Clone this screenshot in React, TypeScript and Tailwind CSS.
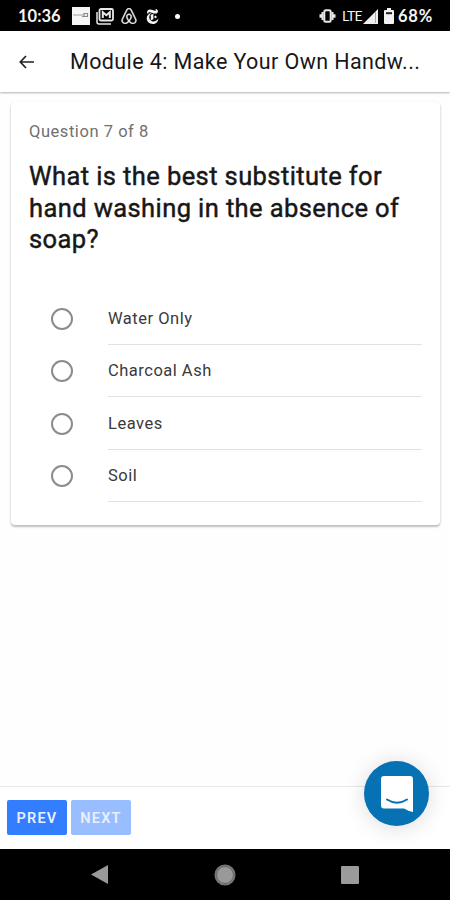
import React, { useState } from 'react';
import { SiAirbnb, SiNewyorktimes } from 'react-icons/si';

const options = ['Water Only', 'Charcoal Ash', 'Leaves', 'Soil'];

const StatusBar: React.FC = () => (
  <div className="flex h-[31px] shrink-0 items-center justify-between bg-black pt-px pl-[18px] pr-[17px] text-[#f4f4f4]">
    <div className="flex items-center">
      <span className="w-[54px] whitespace-nowrap font-[Lato] text-[16.5px] font-bold leading-none">10:36</span>
      <svg width="18" height="18" viewBox="0 0 18 18">
        <path d="M0 0h18v18H0z" fill="#f5f5f5" />
        <path d="M1 8h10" stroke="#bbb" strokeWidth="1.5" />
        <path d="M10 9.5h6M12 9V6.5h3.5V10" fill="none" stroke="#888" strokeWidth="1.2" />
      </svg>
      <svg className="ml-[6px]" width="18" height="17" viewBox="0 0 18 17" fill="none" stroke="#e8e8e8">
        <path d="M1 4v10q0 2 2 2h12" strokeWidth="1.5" />
        <rect x="3.5" y="1" width="13.5" height="11.5" rx="1.5" strokeWidth="1.8" />
        <path d="M6.8 10V4.2l3.5 3 3.5-3V10" strokeWidth="2" />
      </svg>
      <SiAirbnb className="ml-[7px]" size={16} stroke="#e8e8e8" strokeWidth={0.8} />
      <SiNewyorktimes className="ml-[8px]" size={15} />
      <span className="ml-[15px] size-[5px] rounded-full bg-white" />
    </div>
    <div className="flex items-center">
      <svg width="17" height="14" viewBox="0 0 17 14" fill="none" stroke="#e8e8e8">
        <rect x="5.3" y="1.2" width="6.4" height="11.6" rx="1.5" strokeWidth="2" />
        <path d="M3.5 3v8M13.5 3v8M1.5 5.2v3.6M15.5 5.2v3.6" strokeWidth="2" />
      </svg>
      <span className="ml-[6px] w-[21px] whitespace-nowrap font-[Lato] text-[14px] leading-none tracking-[-0.8px]">LTE</span>
      <svg width="15" height="15" viewBox="0 0 15 15">
        <path d="M15 0v15H0z" fill="#eee" />
        <path d="M12.5 3v11" stroke="#aaa" />
      </svg>
      <svg className="ml-[6px]" width="10" height="16" viewBox="0 0 10 16">
        <path d="M3 0h4v2h2q1 0 1 1v12q0 1-1 1H1q-1 0-1-1V3q0-1 1-1h2z" fill="#f2f2f2" />
        <path d="M2 4.2h6v2H2z" fill="#222" />
      </svg>
      <span className="ml-[4px] w-[35px] whitespace-nowrap font-[Lato] text-[16.5px] font-bold leading-none tracking-[0.8px]">68%</span>
    </div>
  </div>
);

const Header: React.FC = () => (
  <header className="flex h-[61px] shrink-0 items-center bg-white pl-[19px] shadow-[0_1px_2px_rgba(0,0,0,0.3)]">
    <svg width="16" height="14" viewBox="0 0 16 14" fill="none" stroke="#222" strokeWidth="1.7">
      <path d="M15 7H1.5M7 1 1.3 7 7 13" />
    </svg>
    <h1 className="ml-[35px] whitespace-nowrap pt-px text-[21.5px] leading-none tracking-[0.4px] text-[#171717]">
      Module 4: Make Your Own Handw...
    </h1>
  </header>
);

const ChatButton: React.FC = () => (
  <button className="absolute top-[-26px] right-[21px] flex size-[65px] items-center justify-center rounded-full bg-[#0671b3] shadow-[0_2px_22px_rgba(0,0,0,0.14)]">
    <svg width="32" height="36" viewBox="0 0 32 36">
      <path d="M3 0h26q3 0 3 3v33q-5-1-9-3.5H3q-3 0-3-3V3q0-3 3-3z" fill="#fff" />
      <path d="M6 23.5q10 6.5 20 0" fill="none" stroke="#0671b3" strokeWidth="2" strokeLinecap="round" />
    </svg>
  </button>
);

const App: React.FC = () => {
  const [selected, setSelected] = useState<number | null>(null);

  return (
    <div className="flex h-[900px] w-[450px] flex-col overflow-hidden bg-[#fefefe] font-[Roboto,sans-serif]">
      <StatusBar />
      <Header />

      <main className="flex-1 pt-[10px] pl-[11px] pr-[10px]">
        <section className="h-[423px] rounded-[4px] bg-white px-[18px] pt-[20px] shadow-[0_2px_2px_rgba(0,0,0,0.18),0_1px_3px_rgba(0,0,0,0.14)]">
          <p className="text-[16.5px] leading-[19px] tracking-[0.55px] text-[#707070]">Question 7 of 8</p>
          <h2 className="mt-[20px] whitespace-nowrap text-[25.5px] leading-[31.5px] tracking-[0.4px] text-[#171717] [-webkit-text-stroke:0.45px_#171717]">
            What is the best substitute for
            <br />
            hand washing in the absence of
            <br />
            soap?
          </h2>

          <div className="mt-[36.5px]">
            {options.map((option, i) => (
              <label key={option} className="flex h-[52.5px] items-center pl-[22px]">
                <input type="radio" name="answer" className="sr-only" checked={selected === i} onChange={() => setSelected(i)} />
                <span className="mt-px flex size-[22px] items-center justify-center rounded-full border-2 border-[#8c8c8c]">
                  {selected === i && <span className="size-[11px] rounded-full bg-[#337dff]" />}
                </span>
                <span className="ml-[35px] flex h-full flex-1 items-center border-b border-[#e2e2e2] pt-[3px] text-[16.5px] tracking-[0.5px] text-[#3a3a3a]">
                  {option}
                </span>
              </label>
            ))}
          </div>
        </section>
      </main>

      <footer className="relative flex h-[63px] shrink-0 items-start gap-[4px] border-t border-[#e8e8e8] bg-white pt-[13px] pl-[7px]">
        <button className="h-[35px] w-[60px] rounded-[2px] bg-[#337dff] pt-[2px] text-[14.5px] font-semibold tracking-[1.2px] text-[#e8f0ff]">PREV</button>
        <button className="h-[35px] w-[60px] rounded-[2px] bg-[#99beff] pt-[2px] text-[14.5px] font-semibold tracking-[1.2px] text-[#e8f0ff]">NEXT</button>
        <ChatButton />
      </footer>

      <nav className="flex h-[51px] shrink-0 items-center justify-between bg-black px-[91px]">
        <svg width="17" height="19" viewBox="0 0 17 19">
          <path d="M17 0v19L0 9.5z" fill="#999" />
        </svg>
        <svg width="22" height="22" viewBox="0 0 22 22">
          <circle cx="11" cy="11" r="9.8" fill="#999" stroke="#777" strokeWidth="1.5" />
          <circle cx="11" cy="11" r="8.5" fill="none" stroke="#555" strokeWidth="0.8" />
        </svg>
        <span className="size-[18px] rounded-[1px] bg-[#9b9b9b]" />
      </nav>
    </div>
  );
};

export default App;
